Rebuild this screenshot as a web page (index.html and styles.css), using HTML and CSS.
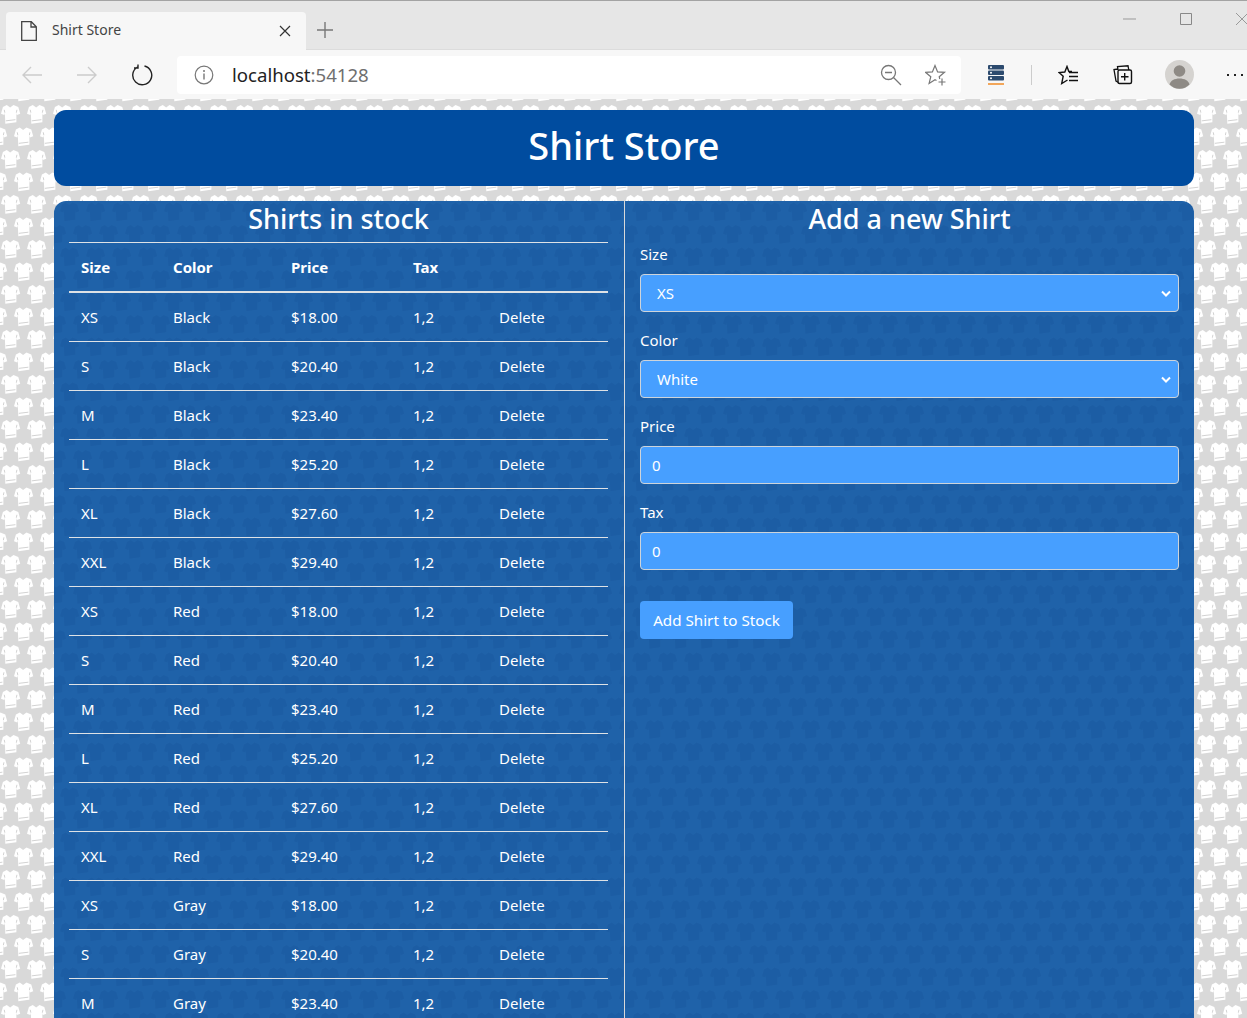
FILE: index.html
```html
<!DOCTYPE html>
<html>
<head>
    <meta charset="UTF-8">
    <title>Shirt Store</title>
    <link rel="stylesheet" href="styles.css">
</head>
<body>
<div class="browser">
    <div class="tab-strip">
        <div class="tab">
            <svg class="tab-page" width="16" height="20" viewBox="0 0 16 20"><path d="M.7.7h9.6l5 5v13.600H.7zM10 .7v5.300h5.300" fill="none" stroke="#444" stroke-width="1.300"/></svg>
            <span class="tab-title">Shirt Store</span>
            <svg class="tab-close" width="12" height="12" viewBox="0 0 12 12"><path d="M1 1l10 10M11 1L1 11" stroke="#333" stroke-width="1.200"/></svg>
        </div>
        <svg class="tab-new" width="18" height="18" viewBox="0 0 18 18"><path d="M9 1v16M1 9h16" stroke="#777" stroke-width="1.400"/></svg>
        <div class="win-controls">
            <svg width="14" height="14" viewBox="0 0 14 14"><path d="M0 7h13" stroke="#999"/></svg>
            <svg width="14" height="14" viewBox="0 0 14 14"><path d="M1.500 1.500h11v11h-11z" fill="none" stroke="#888"/></svg>
            <svg width="14" height="14" viewBox="0 0 14 14"><path d="M1 1l12 12M13 1L1 13" stroke="#999"/></svg>
        </div>
    </div>
    <div class="toolbar">
        <svg class="nav-back" width="22" height="18" viewBox="0 0 22 18"><path d="M21 9H2M10 1L2 9l8 8" fill="none" stroke="#ccc" stroke-width="1.400"/></svg>
        <svg class="nav-forward" width="22" height="18" viewBox="0 0 22 18"><path d="M1 9h19M12 1l8 8-8 8" fill="none" stroke="#ccc" stroke-width="1.400"/></svg>
        <svg class="nav-reload" width="22" height="22" viewBox="0 0 22 22"><path d="M6.500 3A9.500 9.500 0 1 0 13.500 2M7 .5v3.500H3" fill="none" stroke="#222" stroke-width="1.400"/></svg>
        <div class="address">
            <svg class="addr-info" width="20" height="20" viewBox="0 0 20 20"><circle cx="10" cy="10" r="8.800" fill="none" stroke="#777" stroke-width="1.200"/><path d="M10 8.500v6" stroke="#777" stroke-width="1.400"/><circle cx="10" cy="5.900" r="1" fill="#777"/></svg>
            <span class="addr-host">localhost</span><span class="addr-port">:54128</span>
            <svg class="addr-zoom" width="22" height="22" viewBox="0 0 22 22"><circle cx="8.500" cy="8.500" r="7" fill="none" stroke="#777" stroke-width="1.300"/><path d="M5 8.500h7M13.500 13.500l7.500 7.500" stroke="#777" stroke-width="1.300"/></svg>
            <svg class="addr-star" width="22" height="22" viewBox="0 0 22 22"><path d="M14.800 15l-.6-2.300 5.300-4.400-6.900-.4L10 1.500 7.400 7.900l-6.900.4 5.300 4.400-1.700 6.700 5.900-3.700 1.500.8" fill="none" stroke="#777" stroke-width="1.200"/><path d="M17 14.500v7M13.500 18h7" stroke="#777" stroke-width="1.200"/></svg>
        </div>
        <svg class="tool-ext" width="16" height="20" viewBox="0 0 16 20"><rect x="0" y="0" width="16" height="4.500" rx="1" fill="#2c4a6e"/><rect x="0" y="5.500" width="16" height="4.500" rx="1" fill="#2c4a6e"/><rect x="0" y="11" width="16" height="4.500" rx="1" fill="#2c4a6e"/><circle cx="3" cy="2.200" r="1" fill="#fff"/><circle cx="3" cy="7.700" r="1" fill="#fff"/><circle cx="3" cy="13.200" r="1" fill="#fff"/><rect x="0" y="18" width="16" height="2" fill="#f2a65a"/></svg>
        <div class="tool-sep"></div>
        <svg class="tool-favs" width="21" height="20" viewBox="0 0 21 20"><path d="M14 6.500h-3.200L9 1.500 6.800 7 1 7.500l4.200 3.700-1.500 7.300 5.800-3.500" fill="none" stroke="#111" stroke-width="1.400"/><path d="M11 7.500h9M11 11.500h9M11 15.500h9" stroke="#111" stroke-width="1.400"/></svg>
        <svg class="tool-coll" width="20" height="20" viewBox="0 0 20 20"><path d="M5 5l-.5-3.500L15 .8l.8 4.200M5.500 17.500L3 16 1 4.500 5 4" fill="none" stroke="#111" stroke-width="1.300"/><rect x="5" y="5" width="13.500" height="13.500" rx="1.500" fill="none" stroke="#111" stroke-width="1.400"/><path d="M11.700 8v7.500M8 11.700h7.500" stroke="#111" stroke-width="1.400"/></svg>
        <svg class="tool-user" width="29" height="29" viewBox="0 0 29 29"><circle cx="14.500" cy="14.500" r="14.500" fill="#d5d3d0"/><circle cx="14.500" cy="11" r="5.800" fill="#8e8a85"/><path d="M4.500 24.500c1-4 5-6 10-6s9 2 10 6a14 14 0 0 1-20 0z" fill="#8e8a85"/></svg>
        <div class="tool-more"><i></i><i></i><i></i></div>
    </div>
</div>

<div class="page">
    <header class="banner">
        <h1>Shirt Store</h1>
    </header>
    <div class="panel">
        <section class="stock">
            <h2>Shirts in stock</h2>
            <table>
                <colgroup>
                    <col class="col-size"><col class="col-color"><col class="col-price"><col class="col-tax"><col class="col-action">
                </colgroup>
                <thead>
                    <tr><th>Size</th><th>Color</th><th>Price</th><th>Tax</th><th></th></tr>
                </thead>
                <tbody>
                    <tr><td>XS</td><td>Black</td><td>$18.00</td><td>1,2</td><td>Delete</td></tr>
                    <tr><td>S</td><td>Black</td><td>$20.40</td><td>1,2</td><td>Delete</td></tr>
                    <tr><td>M</td><td>Black</td><td>$23.40</td><td>1,2</td><td>Delete</td></tr>
                    <tr><td>L</td><td>Black</td><td>$25.20</td><td>1,2</td><td>Delete</td></tr>
                    <tr><td>XL</td><td>Black</td><td>$27.60</td><td>1,2</td><td>Delete</td></tr>
                    <tr><td>XXL</td><td>Black</td><td>$29.40</td><td>1,2</td><td>Delete</td></tr>
                    <tr><td>XS</td><td>Red</td><td>$18.00</td><td>1,2</td><td>Delete</td></tr>
                    <tr><td>S</td><td>Red</td><td>$20.40</td><td>1,2</td><td>Delete</td></tr>
                    <tr><td>M</td><td>Red</td><td>$23.40</td><td>1,2</td><td>Delete</td></tr>
                    <tr><td>L</td><td>Red</td><td>$25.20</td><td>1,2</td><td>Delete</td></tr>
                    <tr><td>XL</td><td>Red</td><td>$27.60</td><td>1,2</td><td>Delete</td></tr>
                    <tr><td>XXL</td><td>Red</td><td>$29.40</td><td>1,2</td><td>Delete</td></tr>
                    <tr><td>XS</td><td>Gray</td><td>$18.00</td><td>1,2</td><td>Delete</td></tr>
                    <tr><td>S</td><td>Gray</td><td>$20.40</td><td>1,2</td><td>Delete</td></tr>
                    <tr><td>M</td><td>Gray</td><td>$23.40</td><td>1,2</td><td>Delete</td></tr>
                </tbody>
            </table>
        </section>
        <section class="add-shirt">
            <h2>Add a new Shirt</h2>
            <form>
                <div class="field">
                    <label for="size">Size</label>
                    <select id="size"><option>XS</option></select>
                </div>
                <div class="field">
                    <label for="color">Color</label>
                    <select id="color"><option>White</option></select>
                </div>
                <div class="field">
                    <label for="price">Price</label>
                    <input type="text" id="price" value="0">
                </div>
                <div class="field">
                    <label for="tax">Tax</label>
                    <input type="text" id="tax" value="0">
                </div>
                <button type="button">Add Shirt to Stock</button>
            </form>
        </section>
    </div>
</div>
</body>
</html>
```

FILE: styles.css
```css
html, body {
    height: 100%;
}

body {
    margin: 0;
    height: 1018px;
    overflow: hidden;
    display: flex;
    flex-direction: column;
    font-family: "Noto Sans", "Open Sans", sans-serif;
    color: #fff;
}

/* browser chrome */
.browser {
    flex: none;
    height: 99px;
    background-color: #f7f7f7;
    font-family: "Noto Sans", sans-serif;
}

.tab-strip {
    height: 50px;
    box-sizing: border-box;
    border-top: 1px solid #a3a3a3;
    border-bottom: 1px solid #dcdcdc;
    background-color: #e6e6e6;
    display: flex;
    align-items: flex-end;
}

.tab {
    width: 300px;
    height: 38px;
    margin-left: 6px;
    margin-bottom: -1px;
    border-radius: 4px 4px 0 0;
    background-color: #f7f7f7;
    display: flex;
    align-items: center;
    box-sizing: border-box;
    padding: 0 15px 1px;
}

.tab-title {
    margin-left: 15px;
    flex: 1;
    font-size: 14px;
    line-height: 18px;
    margin-top: -1px;
    color: #444;
}

.tab-new {
    margin: 0 0 10px 10px;
}

.win-controls {
    margin-left: auto;
    align-self: flex-start;
    margin-top: 11px;
    margin-right: -2px;
    display: flex;
    gap: 42px;
}

.toolbar {
    height: 49px;
    box-sizing: border-box;
    display: flex;
    align-items: center;
    padding: 0 0 0 21px;
}

.nav-forward {
    margin-left: 33px;
}

.nav-reload {
    margin-left: 33px;
}

.address {
    width: 784px;
    height: 38px;
    margin-left: 24px;
    border-radius: 4px;
    background-color: #fff;
    display: flex;
    align-items: center;
    padding-left: 17px;
    box-sizing: border-box;
    font-size: 18.600px;
}

.addr-host {
    margin-left: 18px;
    color: #222;
}

.addr-port {
    color: #6f6f6f;
}

.addr-zoom {
    margin-left: auto;
}

.addr-star {
    margin-left: 23px;
    margin-right: 14px;
}

.tool-ext {
    margin-left: 27px;
}

.tool-sep {
    width: 1px;
    height: 20px;
    margin-left: 27px;
    background-color: #ccc;
}

.tool-favs {
    margin-left: 26px;
}

.tool-coll {
    margin-left: 34px;
}

.tool-user {
    margin-left: 32px;
}

.tool-more {
    margin-left: 33px;
    display: flex;
    gap: 5px;
}

.tool-more i {
    width: 2px;
    height: 2px;
    background-color: #222;
}

/* page */
.page {
    flex: 1;
    min-height: 0;
    overflow: hidden;
    box-sizing: border-box;
    padding: 11px 53px 0 54px;
    background-color: #d9d9d9;
    background-image: url("data:image/svg+xml,%3Csvg xmlns='http://www.w3.org/2000/svg' width='26' height='45'%3E%3Cdefs%3E%3Cg id='s' transform='scale(.96)'%3E%3Cpath d='M6 0l3.500 2.500L13 0l5 2 2 7-3.500 1.500-.5-2.500v10l-11.500 1.500L4 8l-.5 2.500L0 9l2-7z' fill='%23fff'/%3E%3Cpath d='M5 16.500l10-1.200M4 8l-.6-3M16 8l.6-3' stroke='%23d0d0d0' fill='none'/%3E%3C/g%3E%3C/defs%3E%3Cuse href='%23s' x='0'/%3E%3Cuse href='%23s' x='13' y='22.500'/%3E%3Cuse href='%23s' x='-13' y='22.500'/%3E%3C/svg%3E");
    background-position: 1px 6px;
}

.banner {
    height: 76px;
    padding-bottom: 6px;
    box-sizing: border-box;
    border-radius: 12px;
    background-color: #004c9f;
    display: flex;
    align-items: center;
    justify-content: center;
}

h1 {
    margin: 0;
    font-size: 38px;
    font-weight: 500;
}

.panel {
    margin-top: 15px;
    height: 900px;
    border-radius: 12px 12px 0 0;
    display: flex;
    background-color: #1f62a9;
    background-image: url("data:image/svg+xml,%3Csvg xmlns='http://www.w3.org/2000/svg' width='26' height='45'%3E%3Cdefs%3E%3Cg id='s' transform='scale(.96)'%3E%3Cpath d='M6 0l3.500 2.500L13 0l5 2 2 7-3.500 1.500-.5-2.500v10l-11.500 1.500L4 8l-.5 2.500L0 9l2-7z' fill='%231c5da4'/%3E%3C/g%3E%3C/defs%3E%3Cuse href='%23s' x='0'/%3E%3Cuse href='%23s' x='13' y='22.500'/%3E%3Cuse href='%23s' x='-13' y='22.500'/%3E%3C/svg%3E");
    background-position: 19px 24px;
}

.stock {
    width: 571px;
    box-sizing: border-box;
    padding: 0 16px 0 15px;
    border-right: 1px solid #d9d9d9;
}

.add-shirt {
    flex: 1;
    box-sizing: border-box;
    padding: 0 15px;
}

h2 {
    margin: 0;
    height: 41px;
    line-height: 36px;
    text-align: center;
    font-size: 27px;
    font-weight: 500;
}

/* table */
table {
    width: 539px;
    table-layout: fixed;
    border-collapse: collapse;
    font-size: 15px;
}

.col-size { width: 92px; }
.col-color { width: 118px; }
.col-price { width: 122px; }
.col-tax { width: 86px; }
.col-action { width: 121px; }

th, td {
    padding: 0 12px;
    height: 48px;
    text-align: left;
    border-top: 1px solid #dee2e6;
}

th {
    font-weight: 700;
    border-bottom: 2px solid #dee2e6;
}

/* form */
.field {
    margin-bottom: 16px;
}

label {
    display: block;
    height: 32px;
    line-height: 24px;
    font-size: 15px;
}

select, input[type=text] {
    display: block;
    width: 100%;
    height: 38px;
    box-sizing: border-box;
    border: 1px solid #ced4da;
    border-radius: 4px;
    background-color: #479fff;
    color: #fff;
    font-family: inherit;
    font-size: 15px;
    padding: 0 11px;
}

select {
    appearance: none;
    padding-left: 16px;
    background-image: url("data:image/svg+xml,%3Csvg xmlns='http://www.w3.org/2000/svg' width='10' height='7'%3E%3Cpath d='M1 1.500l4 4 4-4' fill='none' stroke='%23fff' stroke-width='2'/%3E%3C/svg%3E");
    background-repeat: no-repeat;
    background-position: right 7px center;
}

button {
    margin-top: 15px;
    width: 153px;
    height: 38px;
    border: none;
    border-radius: 4px;
    background-color: #479fff;
    color: #fff;
    font-family: inherit;
    font-size: 15.200px;
    padding: 0;
}
```
